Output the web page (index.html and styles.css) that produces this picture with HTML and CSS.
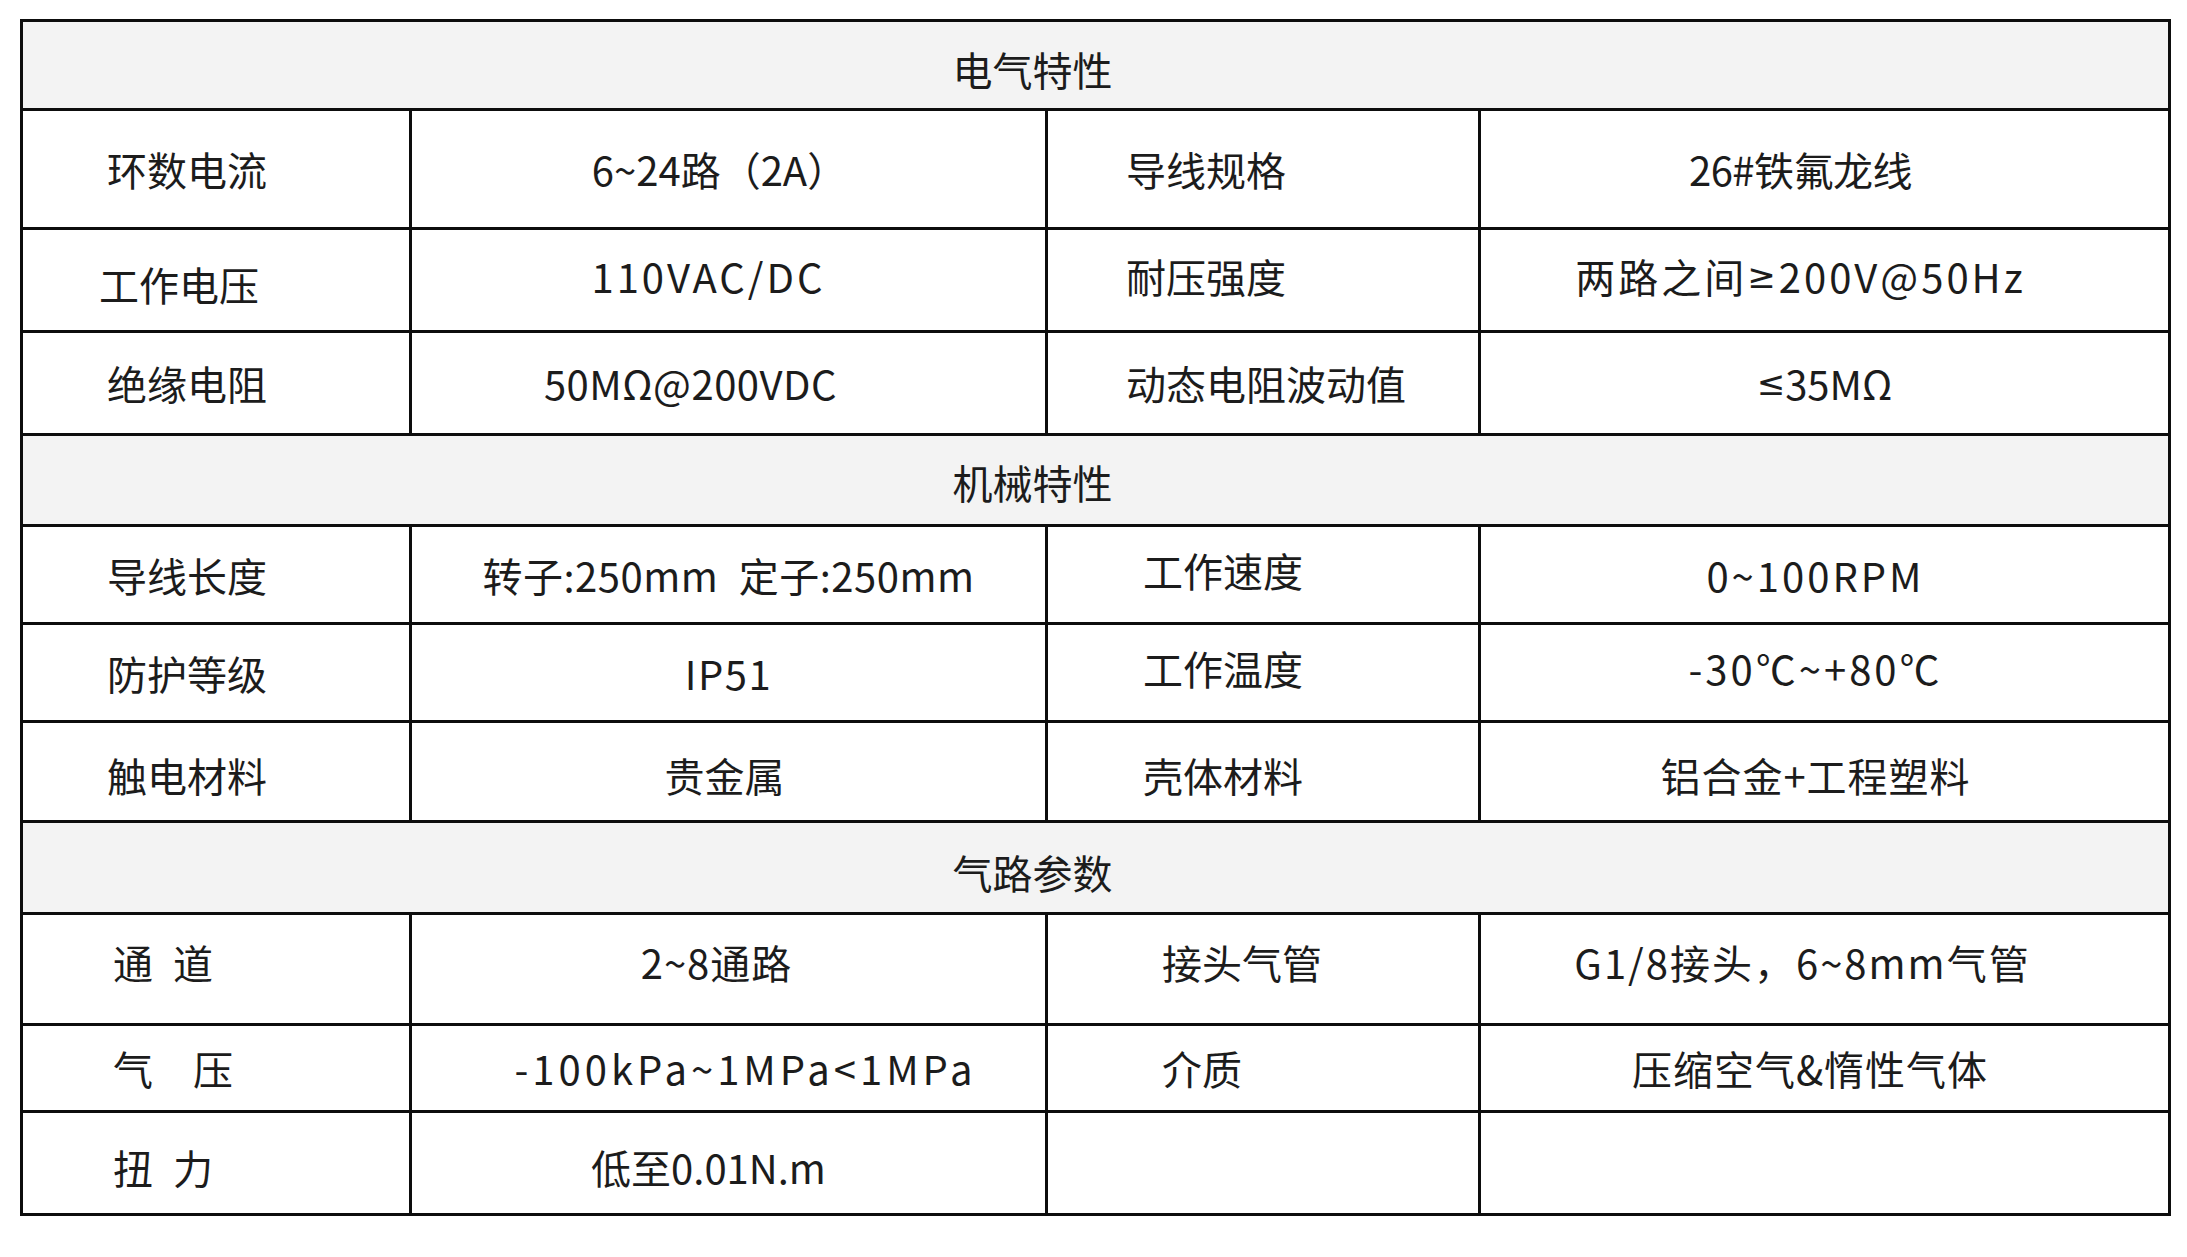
FILE: index.html
```html
<!DOCTYPE html>
<html lang="zh-CN">
<head>
<meta charset="utf-8">
<title>参数表</title>
<link rel="stylesheet" href="styles.css">
</head>
<body>
<div class="sheet">
  <div class="c head">电气特性</div>

  <div class="c lab">环数电流</div>
  <div class="c val o10">6~24路（2A）</div>
  <div class="c lab2 s1">导线规格</div>
  <div class="c val o24 tight">26#铁氟龙线</div>

  <div class="c lab up">工作电压</div>
  <div class="c val sp o20 hi">110VAC/DC</div>
  <div class="c lab2 s1 hi">耐压强度</div>
  <div class="c val sp o24 hi">两路之间<span class="math">≥</span>200V@50Hz</div>

  <div class="c lab">绝缘电阻</div>
  <div class="c val sp05 o38">50MΩ@200VDC</div>
  <div class="c lab2 s1">动态电阻波动值</div>
  <div class="c val"><span class="math">≤</span>35MΩ</div>

  <div class="c head hd2">机械特性</div>

  <div class="c lab">导线长度</div>
  <div class="c val sp05">转子:250mm&ensp;定子:250mm</div>
  <div class="c lab2 s2 hi">工作速度</div>
  <div class="c val sp o10">0~100RPM</div>

  <div class="c lab">防护等级</div>
  <div class="c val sp15">IP51</div>
  <div class="c lab2 s2 hi">工作温度</div>
  <div class="c val sp o10 hi">-30℃~+80℃</div>

  <div class="c lab lo">触电材料</div>
  <div class="c val o4 lo">贵金属</div>
  <div class="c lab2 s2 lo">壳体材料</div>
  <div class="c val sp1 o10 lo">铝合金+工程塑料</div>

  <div class="c head">气路参数</div>

  <div class="c lab wide r7">通&ensp;道</div>
  <div class="c val sp1 o12 r7">2~8通路</div>
  <div class="c lab2 s3 r7">接头气管</div>
  <div class="c val sp2 o22 r7">G1/8接头，6~8mm气管</div>

  <div class="c lab wide">气　压</div>
  <div class="c val sp4 p15">-100kPa~1MPa&lt;1MPa</div>
  <div class="c lab2 s3">介质</div>
  <div class="c val sp1 o15">压缩空气&amp;惰性气体</div>

  <div class="c lab wide r9">扭&ensp;力</div>
  <div class="c val o20 r9">低至0.01N.m</div>
  <div class="c"></div>
  <div class="c"></div>
</div>
</body>
</html>
```

FILE: styles.css
```css
html, body {
  margin: 0;
  padding: 0;
  background: #ffffff;
}

body {
  font-family: "Noto Sans CJK SC", "Noto Sans", sans-serif;
  color: #1c1c1c;
  font-size: 40px;
}

.sheet {
  display: grid;
  grid-template-columns: 389px 636px 433px 690px;
  grid-template-rows: 89px 119px 103px 103px 91px 98px 98px 100px 92px 111px 87px 103px;
  width: max-content;
  margin: 19px 0 0 20px;
  border-left: 3px solid #0d0d0d;
  border-top: 3px solid #0d0d0d;
}

.c {
  box-sizing: border-box;
  border-right: 3px solid #0d0d0d;
  border-bottom: 3px solid #0d0d0d;
  display: flex;
  align-items: center;
  white-space: nowrap;
  line-height: 1;
}

.head {
  grid-column: 1 / -1;
  background: #f3f3f3;
  justify-content: center;
  padding-right: 126px;
  padding-top: 8px;
}

.head.hd2 {
  padding-top: 4px;
}

.lab {
  padding-left: 84px;
}

.lab.up {
  padding-left: 76px;
  padding-top: 8px;
}

.lab.wide {
  padding-left: 90px;
}

.val {
  justify-content: center;
}

.lab2.s1 {
  padding-left: 78px;
}

.lab2.s2 {
  padding-left: 95px;
}

.lab2.s3 {
  padding-left: 114px;
}

/* horizontal nudges of centred values */
.o4 { padding-right: 8px; }
.o10 { padding-right: 18px; }
.o12 { padding-right: 24px; }
.o15 { padding-right: 29px; }
.o20 { padding-right: 40px; }
.o22 { padding-right: 44px; }
.o24 { padding-right: 48px; }
.o38 { padding-right: 76px; }
.p15 { padding-left: 34px; }

/* vertical nudges */
.hi { padding-bottom: 9px; }
.lo { padding-top: 6px; }
.r7 { padding-bottom: 14px; }
.r9 { padding-top: 8px; }

/* letter spacing */
.tight { letter-spacing: -0.5px; }
.sp05 { letter-spacing: 0.5px; }
.sp1 { letter-spacing: 1px; }
.sp15 { letter-spacing: 1.5px; }
.sp2 { letter-spacing: 2px; }
.sp { letter-spacing: 3px; }
.sp4 { letter-spacing: 4px; }

.math {
  font-family: "DejaVu Sans", sans-serif;
  font-size: 34px;
}
```
